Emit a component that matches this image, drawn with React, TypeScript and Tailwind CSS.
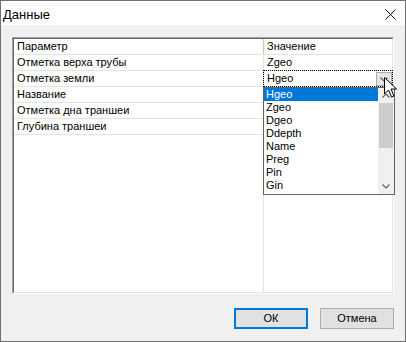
import React from "react";

const rows: [string, string][] = [
  ["Отметка верха трубы", "Zgeo"],
  ["Отметка земли", ""],
  ["Название", ""],
  ["Отметка дна траншеи", ""],
  ["Глубина траншеи", ""],
];

const items = ["Hgeo", "Zgeo", "Dgeo", "Ddepth", "Name", "Preg", "Pin", "Gin"];

export default function App() {
  return (
    <div className="relative w-[406px] h-[342px] border border-[#707070] bg-[#f0f0f0] flex flex-col font-['Liberation_Sans',Arial,sans-serif] text-[11px] text-black select-none">
      {/* Title bar */}
      <div className="h-[24px] bg-white flex items-center justify-between pl-[2px] pr-[9px]">
        <span className="text-[13px] leading-none mt-[2px]">Данные</span>
        <svg width="11" height="11" viewBox="0 0 11 11" className="mt-[2px]">
          <path d="M0.5 0.5 L10.5 10.5 M10.5 0.5 L0.5 10.5" stroke="#111" strokeWidth="1" />
        </svg>
      </div>

      {/* Body */}
      <div className="flex-1 flex flex-col px-[11px] pt-[12px] pb-[12px]">
        {/* Grid box */}
        <div className="h-[257px] border-t border-l border-[#a0a0a0] border-r-white border-b-white border-r border-b">
          <div className="h-full border-t border-l border-t-[#696969] border-l-[#696969] border-r border-b border-r-[#e3e3e3] border-b-[#e3e3e3] bg-white flex flex-col">
            {/* header */}
            <div className="flex h-[16px] border-b border-[#e3e3e3] leading-[15px]">
              <div className="w-[250px] border-r border-[#c8c8c8] pl-[3px]">Параметр</div>
              <div className="flex-1 pl-[3px]">Значение</div>
            </div>
            {rows.map(([a, b], i) => (
              <div key={i} className="flex h-[16px] border-b border-[#e3e3e3] leading-[15px]">
                <div className="w-[250px] border-r border-[#e3e3e3] pl-[3px]">{a}</div>
                <div className="relative flex-1 pl-[3px]">
                  {i === 1 ? (
                    <>
                      <div className="absolute left-[-1px] right-[-1px] top-[-1px] bottom-[-1px] border border-dotted border-black" />
                      <span>Hgeo</span>
                      <div className="absolute right-0 top-[1px] w-[16px] h-[14px] bg-[#e5e5e5] border border-[#acacac] flex items-center justify-center">
                        <svg width="8" height="5" viewBox="0 0 8 5">
                          <path d="M0.5 0.5 L4 4 L7.5 0.5" fill="none" stroke="#606060" strokeWidth="1.2" />
                        </svg>
                      </div>
                    </>
                  ) : (
                    b
                  )}
                </div>
              </div>
            ))}
            <div className="flex flex-1">
              <div className="w-[250px] border-r border-[#e3e3e3]" />
              <div className="flex-1" />
            </div>
          </div>
        </div>

        {/* Buttons */}
        <div className="mt-[14px] flex justify-end gap-[12px]">
          <button className="w-[74px] h-[21px] bg-[#e1e1e1] border-2 border-[#0078d7] text-[11px] leading-none flex items-center justify-center">
            ОК
          </button>
          <button className="w-[74px] h-[21px] bg-[#e1e1e1] border border-[#adadad] text-[11px] leading-none flex items-center justify-center">
            Отмена
          </button>
        </div>
      </div>

      {/* Dropdown list */}
      <div className="absolute left-[262px] top-[86px] w-[132px] h-[108px] border border-[#646464] bg-white flex">
        <div className="w-[114px] flex flex-col">
          {items.map((it, i) => (
            <div
              key={it}
              className={
                "h-[13px] leading-[13px] pl-[2px] " +
                (i === 0 ? "bg-[#0078d7] text-white" : "text-black")
              }
            >
              {it}
            </div>
          ))}
        </div>
        <div className="w-[16px] bg-[#f0f0f0] flex flex-col">
          <div className="h-[15px] flex items-center justify-center">
            <svg width="8" height="5" viewBox="0 0 8 5">
              <path d="M0.5 4.5 L4 1 L7.5 4.5" fill="none" stroke="#606060" strokeWidth="1.2" />
            </svg>
          </div>
          <div className="h-[45px] mx-[1px] bg-[#cdcdcd]" />
          <div className="flex-1" />
          <div className="h-[16px] flex items-center justify-center">
            <svg width="8" height="5" viewBox="0 0 8 5">
              <path d="M0.5 0.5 L4 4 L7.5 0.5" fill="none" stroke="#606060" strokeWidth="1.2" />
            </svg>
          </div>
        </div>
      </div>

      {/* Mouse cursor */}
      <svg className="absolute left-[383px] top-[76px]" width="14" height="22" viewBox="0 0 14 22">
        <path
          d="M0.5 0.5 L0.5 17 L4.5 13 L7.5 20 L10 19 L7 12 L12.5 12 Z"
          fill="white"
          stroke="black"
          strokeWidth="1"
          strokeLinejoin="miter"
        />
      </svg>
    </div>
  );
}
